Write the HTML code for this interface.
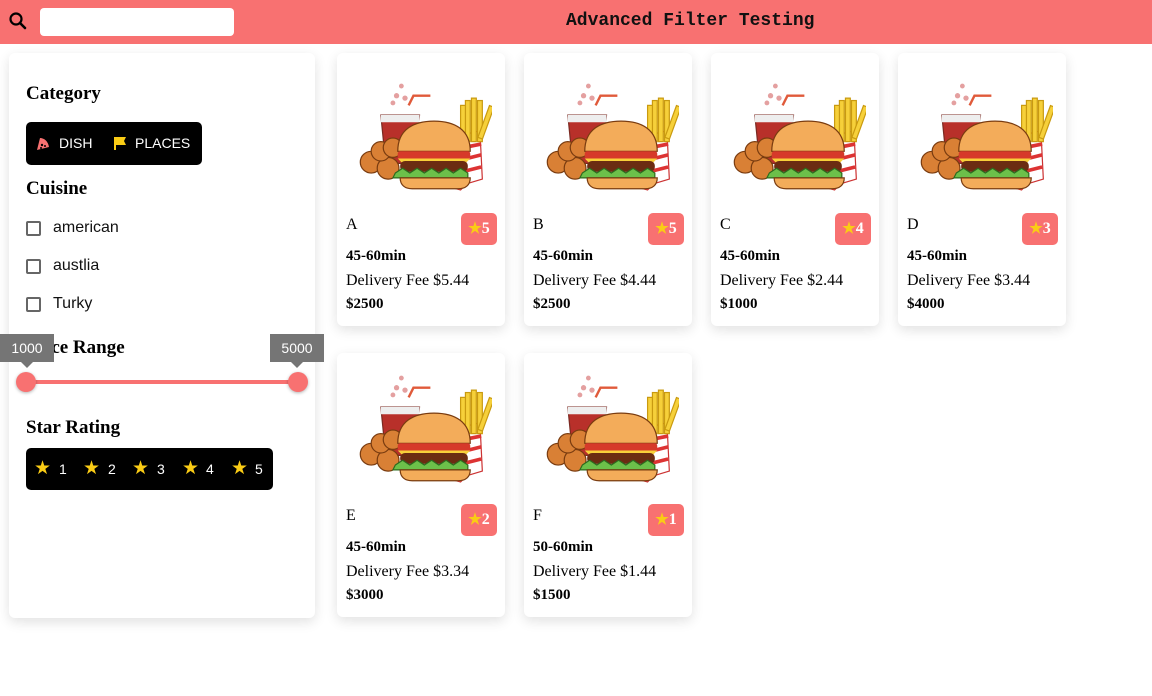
<!DOCTYPE html>
<html><head><meta charset="utf-8"><style>
*{box-sizing:border-box;margin:0;padding:0}
body{width:1152px;height:696px;background:#fff;font-family:"Liberation Serif",serif;position:relative;overflow:hidden}
.top{position:absolute;left:0;top:0;width:1152px;height:44px;background:#f87171}
.search{position:absolute;left:40px;top:8px;width:194px;height:28px;background:#fff;border-radius:4px}
.title{position:absolute;left:566px;top:11px;font-family:"Liberation Mono",monospace;font-weight:bold;font-size:18px;color:#111}
.side{position:absolute;left:9px;top:53px;width:306px;height:565px;background:#fff;border-radius:6px;box-shadow:0 4px 12px rgba(0,0,0,.12)}
h3{position:absolute;left:26px;font-size:19px;font-weight:bold;color:#000}
.bar{position:absolute;left:26px;background:#000;border-radius:5px;color:#fff;font-family:"Liberation Sans",sans-serif;font-size:14px}
.chk{position:absolute;left:26px;font-family:"Liberation Sans",sans-serif;font-size:16px;color:#111}
.chk i{position:absolute;left:0;top:2px;width:15px;height:15px;border:2px solid #666;border-radius:2px}
.chk span{position:absolute;left:27px;top:0;white-space:nowrap}
.tip{position:absolute;top:334px;width:54px;height:28px;background:#757575;color:#fff;font-family:"Liberation Sans",sans-serif;font-size:14px;text-align:center;line-height:28px}
.tip:after{content:"";position:absolute;left:21px;bottom:-6px;border:6px solid transparent;border-bottom:0;border-top-color:#757575}
.card{position:absolute;width:168px;background:#fff;border-radius:6px;box-shadow:0 4px 12px rgba(0,0,0,.12)}
.card svg{position:absolute;left:10px;top:28px}
.card .n{position:absolute;left:9px;top:163px;font-size:16px}
.badge{position:absolute;left:124px;top:160px;width:36px;height:32px;background:#f87171;border-radius:5px;color:#fff;font-weight:bold;font-size:16px;line-height:32px;text-align:center}
.badge b{color:#facc15;font-size:15px}
.card .t{position:absolute;left:9px;top:195px;font-size:15px;font-weight:bold}
.card .d{position:absolute;left:9px;top:219px;font-size:16px;white-space:nowrap}
.card .p{position:absolute;left:9px;top:243px;font-size:15px;font-weight:bold}
.st{position:absolute;top:9px;color:#facc15;font-size:19px}
.nm{position:absolute;top:13px}
</style></head><body>
<div class="top">
<svg style="position:absolute;left:8px;top:11px" width="20" height="20" viewBox="0 0 20 20"><circle cx="8" cy="8" r="5.5" fill="none" stroke="#000" stroke-width="2.2"/><path d="M12 12l5 5" stroke="#000" stroke-width="2.6" stroke-linecap="round"/></svg>
<div class="search"></div>
<div class="title">Advanced Filter Testing</div>
</div>
<svg width="0" height="0" style="position:absolute"><defs><g id="food">
<circle cx="45" cy="4" r="2" fill="#e4a0a0"/><circle cx="41" cy="12" r="2.2" fill="#e4a0a0"/><circle cx="48" cy="14" r="2.2" fill="#e4a0a0"/><circle cx="38" cy="18" r="2" fill="#e4a0a0"/>
<path d="M51 20l4-8h14" stroke="#e05a3a" stroke-width="2" fill="none"/>
<path d="M28 28h32l-4 40h-24z" fill="#b8302a" stroke="#7a2a22" stroke-width="1"/>
<path d="M28 28h32v6h-32z" fill="#eee"/>
<path d="M102 48l4 30-12 12-22-6z" fill="#fff" stroke="#c33" stroke-width="1"/>
<path d="M94 45l16-4 2 40-20 6z" fill="#fff" stroke="#c33"/>
<path d="M96 55l15-3M95 65l16-4M95 75l16-4" stroke="#d33" stroke-width="3"/>
<g stroke="#c99a10" stroke-width="1" fill="#f6d03a"><rect x="98" y="16" width="4" height="34"/><rect x="103" y="14" width="4" height="36"/><rect x="108" y="16" width="4" height="34"/><rect x="113" y="20" width="4" height="28" transform="rotate(20 115 34)"/><rect x="94" y="20" width="4" height="30"/></g>
<circle cx="20" cy="67" r="9" fill="#d98035" stroke="#7a3c10"/><circle cx="34" cy="72" r="9" fill="#d98035" stroke="#7a3c10"/><circle cx="28" cy="58" r="8" fill="#d98035" stroke="#7a3c10"/><circle cx="38" cy="55" r="8" fill="#d98035" stroke="#7a3c10"/>
<path d="M42 58c0-18 13-25 30-25s30 7 30 25z" fill="#f3ac5a" stroke="#7a3c10"/>
<rect x="42" y="58" width="60" height="6" rx="2" fill="#d63a2a"/>
<path d="M42 64h60l-6 6h-48z" fill="#f8d03a"/>
<rect x="44" y="66" width="56" height="9" rx="4" fill="#6b2c12"/>
<path d="M40 76l6-4 6 4 6-4 6 4 6-4 6 4 6-4 6 4 6-4 6 4v4h-62z" fill="#6cc04a" stroke="#2d6b1f"/>
<path d="M44 80h58c0 6-4 9-10 9h-38c-6 0-10-3-10-9z" fill="#f3ac5a" stroke="#7a3c10"/>
</g></defs></svg>

<div class="side">
</div>
<h3 style="top:83px">Category</h3>
<div class="bar" style="top:122px;width:176px;height:43px">
<svg style="position:absolute;left:10px;top:14px" width="14" height="15" viewBox="0 0 14 15"><path d="M1 14L4 2c4 0 8 3 9 9z" fill="#f87171"/><circle cx="6" cy="9" r="1.2" fill="#000"/><circle cx="9" cy="10" r="1" fill="#000"/><circle cx="5" cy="12" r="1" fill="#000"/></svg>
<span style="position:absolute;left:33px;top:13px">DISH</span>
<svg style="position:absolute;left:87px;top:14px" width="14" height="15" viewBox="0 0 14 15"><path d="M1 1h2v13H1zM3 1h10l-2 4 2 4H3z" fill="#facc15"/></svg>
<span style="position:absolute;left:109px;top:13px">PLACES</span>
</div>
<h3 style="top:178px">Cuisine</h3>
<div class="chk" style="top:219px"><i></i><span>american</span></div>
<div class="chk" style="top:257px"><i></i><span>austlia</span></div>
<div class="chk" style="top:295px"><i></i><span>Turky</span></div>
<h3 style="top:337px">Price Range</h3>
<div class="tip" style="left:0">1000</div>
<div class="tip" style="left:270px">5000</div>
<div style="position:absolute;left:26px;top:380px;width:272px;height:4px;background:#f87171"></div>
<div style="position:absolute;left:16px;top:372px;width:20px;height:20px;border-radius:50%;background:#f87171;box-shadow:0 1px 3px rgba(0,0,0,.3)"></div>
<div style="position:absolute;left:288px;top:372px;width:20px;height:20px;border-radius:50%;background:#f87171;box-shadow:0 1px 3px rgba(0,0,0,.3)"></div>
<h3 style="top:417px">Star Rating</h3>
<div class="bar" style="top:448px;width:247px;height:42px">
<span class="st" style="left:8px">★</span><span class="nm" style="left:33px">1</span>
<span class="st" style="left:57px">★</span><span class="nm" style="left:82px">2</span>
<span class="st" style="left:106px">★</span><span class="nm" style="left:131px">3</span>
<span class="st" style="left:156px">★</span><span class="nm" style="left:180px">4</span>
<span class="st" style="left:205px">★</span><span class="nm" style="left:229px">5</span>
</div>

<div class="card" style="left:337px;top:53px;height:273px"><svg width="145" height="114" viewBox="0 0 120 94"><use href="#food"/></svg><div class="n">A</div><div class="badge"><b>★</b>5</div><div class="t">45-60min</div><div class="d">Delivery Fee $5.44</div><div class="p">$2500</div></div>
<div class="card" style="left:524px;top:53px;height:273px"><svg width="145" height="114" viewBox="0 0 120 94"><use href="#food"/></svg><div class="n">B</div><div class="badge"><b>★</b>5</div><div class="t">45-60min</div><div class="d">Delivery Fee $4.44</div><div class="p">$2500</div></div>
<div class="card" style="left:711px;top:53px;height:273px"><svg width="145" height="114" viewBox="0 0 120 94"><use href="#food"/></svg><div class="n">C</div><div class="badge"><b>★</b>4</div><div class="t">45-60min</div><div class="d">Delivery Fee $2.44</div><div class="p">$1000</div></div>
<div class="card" style="left:898px;top:53px;height:273px"><svg width="145" height="114" viewBox="0 0 120 94"><use href="#food"/></svg><div class="n">D</div><div class="badge"><b>★</b>3</div><div class="t">45-60min</div><div class="d">Delivery Fee $3.44</div><div class="p">$4000</div></div>
<div class="card" style="left:337px;top:353px;height:264px;"><svg width="145" height="114" viewBox="0 0 120 94" style="top:20px"><use href="#food"/></svg><div class="n" style="top:154px">E</div><div class="badge" style="top:151px"><b>★</b>2</div><div class="t" style="top:186px">45-60min</div><div class="d" style="top:210px">Delivery Fee $3.34</div><div class="p" style="top:234px">$3000</div></div>
<div class="card" style="left:524px;top:353px;height:264px;"><svg width="145" height="114" viewBox="0 0 120 94" style="top:20px"><use href="#food"/></svg><div class="n" style="top:154px">F</div><div class="badge" style="top:151px"><b>★</b>1</div><div class="t" style="top:186px">50-60min</div><div class="d" style="top:210px">Delivery Fee $1.44</div><div class="p" style="top:234px">$1500</div></div>
</body></html>
